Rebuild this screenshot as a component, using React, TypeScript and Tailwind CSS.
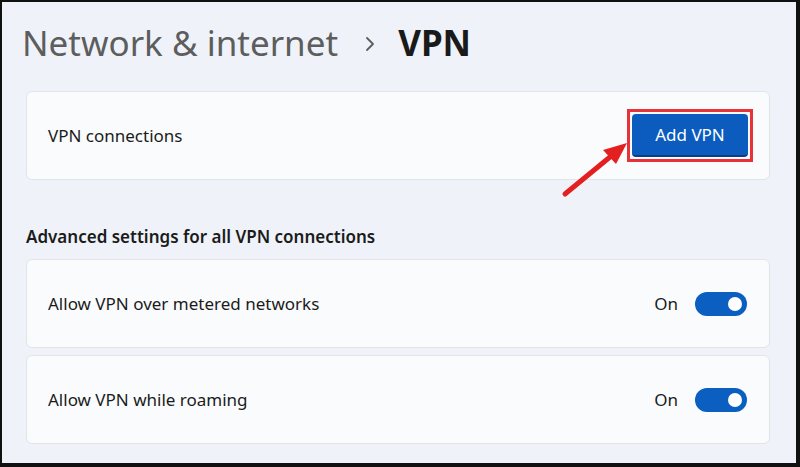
import React from "react";

const font = { fontFamily: '"Noto Sans", "Open Sans", sans-serif' };

function Toggle() {
  return (
    <div className="relative w-[52px] h-[24px] rounded-full bg-[#0b5fc0]">
      <div className="absolute right-[5px] top-[5px] w-[14px] h-[14px] rounded-full bg-white" />
    </div>
  );
}

function ToggleRow({ label }: { label: string }) {
  return (
    <div className="h-[89px] flex items-center justify-between pl-[21px] pr-[22px] rounded-[6px] border border-[#e2e4e8] bg-[#fafbfd]">
      <span className="text-[17px] text-[#1b1b1b]">{label}</span>
      <div className="flex items-center gap-[17px]">
        <span className="text-[17px] text-[#1b1b1b]">On</span>
        <Toggle />
      </div>
    </div>
  );
}

export default function App() {
  return (
    <div
      className="relative w-[800px] h-[467px] overflow-hidden bg-[#eff3f9] border-l-2 border-t-2 border-r-4 border-b-4 border-[#111]"
      style={font}
    >
      {/* TITLE */}
      <div className="flex items-center h-[84px] pl-[20px] pb-[2px]">
        <span className="text-[35px] text-[#5d5d5d]">Network &amp; internet</span>
        <svg className="ml-[27px] mr-[23px] mt-[2px]" width="10" height="16" viewBox="0 0 10 16">
          <polyline points="2,2 8,8 2,14" fill="none" stroke="#5d5d5d" strokeWidth="1.8" strokeLinecap="round" strokeLinejoin="round" />
        </svg>
        <span className="text-[35px] font-bold text-[#1a1a1a]">VPN</span>
      </div>

      <div className="pl-[24px] pr-[26px] pt-[5px]">
        {/* VPN CONNECTIONS */}
        <div className="h-[89px] flex items-center justify-between pl-[21px] pr-[16px] rounded-[6px] border border-[#e2e4e8] bg-[#fafbfd]">
          <span className="text-[17px] text-[#1b1b1b]">VPN connections</span>
          <div className="border-[3px] border-[#e8323a] p-[2px]">
            <button className="w-[116px] h-[43px] rounded-[4px] bg-[#0b5cbe] border-b-2 border-[#073f85] text-white text-[17px]">
              Add VPN
            </button>
          </div>
        </div>

        {/* ADVANCED */}
        <div className="h-[79px] flex items-end pb-[10px]">
          <span className="text-[17px] leading-[24px] font-semibold text-[#1b1b1b]">
            Advanced settings for all VPN connections
          </span>
        </div>

        <div className="flex flex-col gap-[7px]">
          <ToggleRow label="Allow VPN over metered networks" />
          <ToggleRow label="Allow VPN while roaming" />
        </div>
      </div>

      {/* ARROW */}
      <svg className="absolute left-0 top-0" width="800" height="467">
        <line x1="563" y1="192" x2="608" y2="155" stroke="#e3201f" strokeWidth="5" strokeLinecap="round" />
        <polygon points="625,141 601,148 614,162" fill="#e3201f" />
      </svg>
    </div>
  );
}
